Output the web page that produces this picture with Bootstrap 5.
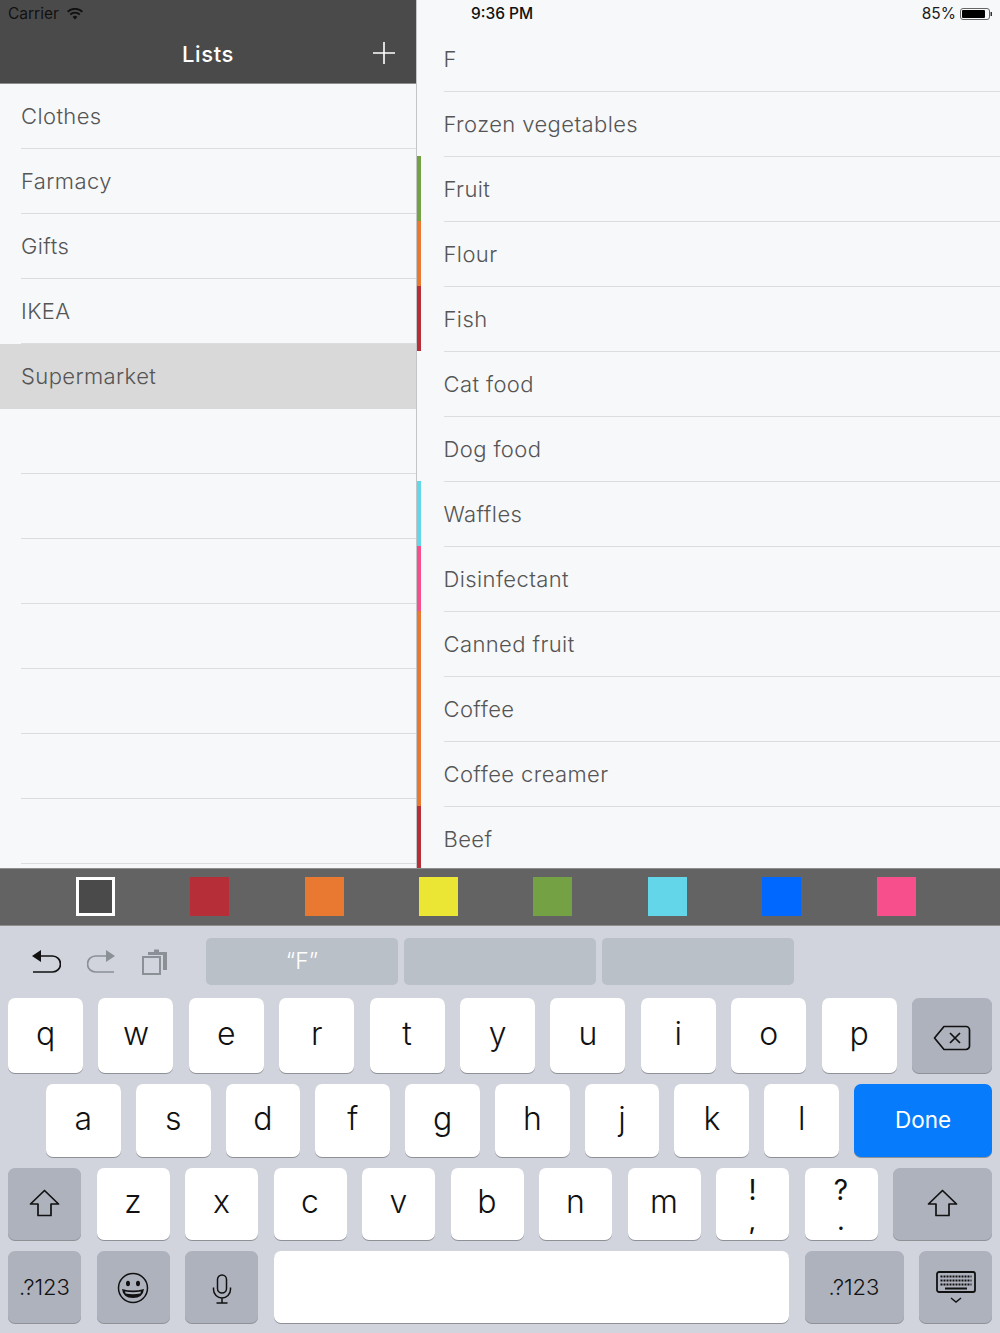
<!DOCTYPE html>
<html lang="en">
<head>
    <meta charset="UTF-8">
    <meta name="viewport" content="width=device-width, initial-scale=1.0">
    <title>Lists</title>
    <link href="https://cdn.jsdelivr.net/npm/bootstrap@5.3.0/dist/css/bootstrap.min.css" rel="stylesheet">
    <style>
        html, body {
            height: 1333px;
            overflow: hidden;
        }
        body {
            background-color: #f7f8fa;
            font-family: Inter, "Liberation Sans", sans-serif;
        }
        .panes {
            height: 868px;
            overflow: hidden;
        }
        .pane-left {
            width: 417px;
            border-right: 1px solid #c4c5c7;
        }
        .status-line {
            height: 26px;
            font-size: 15.5px;
            padding-top: 4px;
            padding-bottom: 2px;
            line-height: 20px;
            color: #1c1c1c;
        }
        .nav-head {
            height: 84px;
            background-color: #4a4a4a;
            border-bottom: 1px solid #8c8c8c;
        }
        .nav-head .status-line {
            padding-left: 8px;
            color: #111;
        }
        .nav-title {
            height: 57px;
            color: #fff;
            font-size: 22px;
            font-weight: 500;
            letter-spacing: .6px;
            padding-top: 16px;
            line-height: 25px;
        }
        .plus-btn {
            right: 20px;
            top: 41px;
        }
        .shop-list {
            border-radius: 0;
        }
        .shop-row {
            height: 65px;
            padding: 0;
            background: transparent;
            border: 0;
            color: #555;
            font-size: 22px;
            font-weight: 300;
            letter-spacing: .4px;
        }
        .row-label {
            height: 65px;
            line-height: 65px;
            display: block;
            border-bottom: 1px solid #dcdde0;
        }
        .pane-left .shop-row {
            padding-left: 21px;
        }
        .pane-left .shop-row.picked {
            padding-left: 0;
            background-color: #d9d9d9;
        }
        .picked .row-label {
            padding-left: 21px;
            border-bottom-color: #d9d9d9;
        }
        .pane-right .shop-row {
            border-left: 4px solid transparent;
            padding-left: 22.5px;
        }
        .pane-right .row-label {
            height: 66px;
            line-height: 67px;
        }
        .pane-right .status-line {
            padding-left: 54px;
            padding-right: 7px;
        }
        .clock {
            font-weight: 500;
            color: #111;
        }
        .stripe-green { border-left-color: #73a143 !important; }
        .stripe-orange { border-left-color: #e97831 !important; }
        .stripe-red { border-left-color: #b62f38 !important; }
        .stripe-cyan { border-left-color: #63d6ea !important; }
        .stripe-pink { border-left-color: #f64f8c !important; }
        .swatch-bar {
            height: 58px;
            background-color: #636363;
            border-top: 1px solid #8e8e8e;
            border-bottom: 1px solid #8e8e8e;
            padding-left: 75.7px;
            gap: 75.43px;
        }
        .swatch {
            width: 39px;
            height: 39px;
            margin-top: -1px;
        }
        .swatch-on {
            background-color: #4a4a4a;
            border: 3px solid #fff;
        }
        .swatch-red { background-color: #b62f38; }
        .swatch-orange { background-color: #e97831; }
        .swatch-yellow { background-color: #ebe533; }
        .swatch-green { background-color: #73a143; }
        .swatch-cyan { background-color: #63d6ea; }
        .swatch-blue { background-color: #0067ff; }
        .swatch-pink { background-color: #f64f8c; }
        .keyboard {
            height: 407px;
            background-color: #d1d4dc;
            padding: 12px 8px 10px;
        }
        .tool-row {
            height: 48px;
            margin-bottom: 12px;
        }
        .tool-icons {
            width: 198px;
            height: 47px;
            padding-left: 23px;
            gap: 26px;
        }
        .suggest {
            width: 192px;
            height: 47px;
            margin-right: 6px;
            background-color: #b9c0c8;
            border-radius: 5px;
            color: #fff;
            font-size: 23px;
            font-weight: 300;
        }
        .key-row {
            gap: 15.4px;
            margin-bottom: 11px;
        }
        .key-row-1 { height: 75px; }
        .key-row-2 { height: 73px; padding-left: 38px; gap: 15px; }
        .key-row-3, .key-row-4 { height: 72px; gap: 15.5px; }
        .kb-key {
            flex: 1 1 0;
            min-width: 0;
            padding: 0 0 4px;
            border: 0;
            border-radius: 7px;
            background-color: #fff;
            color: #111;
            font-size: 32px;
            font-weight: 300;
            line-height: 1;
            box-shadow: 0 1px 0 #8f9197;
        }
        .kb-key:hover, .kb-key:active {
            background-color: #fff;
            color: #111;
        }
        .key-dark, .key-dark:hover {
            background-color: #aeb2bd;
            padding-bottom: 0;
        }
        .key-fixed-73 { flex: 0 0 73px; }
        .key-fixed-80 { flex: 0 0 80px; }
        .key-fixed-99 { flex: 0 0 99px; }
        .key-done, .key-done:hover {
            flex: 0 0 138px;
            padding-bottom: 0;
            background-color: #067bfb;
            color: #fff;
            font-size: 22.5px;
            font-weight: 400;
        }
        .key-num {
            font-size: 22px;
        }
        .key-pair {
            font-size: 28px;
            font-weight: 400;
            line-height: 31.5px;
            padding: 4px 0 0;
        }
        .key-pair .key-lower {
            font-size: 24px;
            font-weight: 500;
        }
        .shift-icon {
            margin-bottom: 4px;
        }
    </style>
</head>
<body>

    <div class="panes d-flex">
        <div class="pane-left flex-shrink-0">
            <div class="nav-head position-relative">
                <div class="status-line d-flex align-items-center gap-2">
                    <span>Carrier</span>
                    <svg width="16" height="12" viewBox="0 0 16 12"><path d="M8 11.500 5.600 8.900a3.500 3.500 0 0 1 4.800 0zM3.900 7.200l-1.300-1.400a8 8 0 0 1 10.800 0l-1.300 1.400a6 6 0 0 0-8.200 0zM1.300 4.400 0 3a11.800 11.800 0 0 1 16 0l-1.300 1.400a9.900 9.900 0 0 0-13.400 0z" fill="#111"/></svg>
                </div>
                <div class="nav-title text-center">Lists</div>
                <svg class="plus-btn position-absolute" width="24" height="24" viewBox="0 0 24 24"><path d="M12 1v22M1 12h22" stroke="#fff" stroke-width="1.600"/></svg>
            </div>
            <ul class="list-group list-group-flush shop-list">
                <li class="list-group-item shop-row"><span class="row-label">Clothes</span></li>
                <li class="list-group-item shop-row"><span class="row-label">Farmacy</span></li>
                <li class="list-group-item shop-row"><span class="row-label">Gifts</span></li>
                <li class="list-group-item shop-row"><span class="row-label">IKEA</span></li>
                <li class="list-group-item shop-row picked"><span class="row-label">Supermarket</span></li>
                <li class="list-group-item shop-row"><span class="row-label"></span></li>
                <li class="list-group-item shop-row"><span class="row-label"></span></li>
                <li class="list-group-item shop-row"><span class="row-label"></span></li>
                <li class="list-group-item shop-row"><span class="row-label"></span></li>
                <li class="list-group-item shop-row"><span class="row-label"></span></li>
                <li class="list-group-item shop-row"><span class="row-label"></span></li>
                <li class="list-group-item shop-row"><span class="row-label"></span></li>
            </ul>
        </div>

        <div class="pane-right flex-grow-1">
            <div class="status-line d-flex align-items-center justify-content-between">
                <span class="clock">9:36 PM</span>
                <span class="d-flex align-items-center gap-1">85%
                    <svg width="33" height="14" viewBox="0 0 33 14"><rect x=".5" y="1.500" width="29" height="11" rx="2.500" fill="none" stroke="#666"/><rect x="2" y="3" width="23" height="8" rx="1" fill="#000"/><rect x="30.500" y="5" width="1.500" height="4" fill="#333"/></svg>
                </span>
            </div>
            <ul class="list-group list-group-flush shop-list">
                <li class="list-group-item shop-row"><span class="row-label">F</span></li>
                <li class="list-group-item shop-row"><span class="row-label">Frozen vegetables</span></li>
                <li class="list-group-item shop-row stripe-green"><span class="row-label">Fruit</span></li>
                <li class="list-group-item shop-row stripe-orange"><span class="row-label">Flour</span></li>
                <li class="list-group-item shop-row stripe-red"><span class="row-label">Fish</span></li>
                <li class="list-group-item shop-row"><span class="row-label">Cat food</span></li>
                <li class="list-group-item shop-row"><span class="row-label">Dog food</span></li>
                <li class="list-group-item shop-row stripe-cyan"><span class="row-label">Waffles</span></li>
                <li class="list-group-item shop-row stripe-pink"><span class="row-label">Disinfectant</span></li>
                <li class="list-group-item shop-row stripe-orange"><span class="row-label">Canned fruit</span></li>
                <li class="list-group-item shop-row stripe-orange"><span class="row-label">Coffee</span></li>
                <li class="list-group-item shop-row stripe-orange"><span class="row-label">Coffee creamer</span></li>
                <li class="list-group-item shop-row stripe-red"><span class="row-label">Beef</span></li>
            </ul>
        </div>
    </div>

    <div class="swatch-bar d-flex align-items-center">
        <div class="swatch swatch-on"></div>
        <div class="swatch swatch-red"></div>
        <div class="swatch swatch-orange"></div>
        <div class="swatch swatch-yellow"></div>
        <div class="swatch swatch-green"></div>
        <div class="swatch swatch-cyan"></div>
        <div class="swatch swatch-blue"></div>
        <div class="swatch swatch-pink"></div>
    </div>

    <div class="keyboard">
        <div class="tool-row d-flex align-items-start">
            <div class="tool-icons d-flex align-items-center">
                <svg width="30" height="25" viewBox="0 0 30 25"><path d="M10 1 1 7l9 6z" fill="#111"/><path d="M8 7h13.500a7.500 7.500 0 0 1 0 16H2" fill="none" stroke="#111" stroke-width="1.700"/></svg>
                <svg width="29" height="25" viewBox="0 0 29 25"><path d="M19 1l9 6-9 6z" fill="#8b8f96"/><path d="M21 7H8.500a7.500 7.500 0 0 0 0 16H27" fill="none" stroke="#8b8f96" stroke-width="1.700"/></svg>
                <svg width="26" height="27" viewBox="0 0 26 27"><rect x="1" y="9" width="17" height="17" fill="none" stroke="#8b8f96" stroke-width="2"/><path d="M6 6.500V4h6V1.500h5V4h8v18h-4V7H6z" fill="#8b8f96"/></svg>
            </div>
            <div class="suggest d-flex align-items-center justify-content-center">“F”</div>
            <div class="suggest"></div>
            <div class="suggest"></div>
        </div>

        <div class="key-row key-row-1 d-flex">
            <button class="btn kb-key">q</button>
            <button class="btn kb-key">w</button>
            <button class="btn kb-key">e</button>
            <button class="btn kb-key">r</button>
            <button class="btn kb-key">t</button>
            <button class="btn kb-key">y</button>
            <button class="btn kb-key">u</button>
            <button class="btn kb-key">i</button>
            <button class="btn kb-key">o</button>
            <button class="btn kb-key">p</button>
            <button class="btn kb-key key-dark key-fixed-80">
                <svg width="38" height="26" viewBox="0 0 38 26"><path d="M11 1.500h22a3.500 3.500 0 0 1 3.500 3.500v16a3.500 3.500 0 0 1-3.500 3.500H11L1.500 13z" fill="none" stroke="#111" stroke-width="1.700" stroke-linejoin="round"/><path d="M17 8l10 10M27 8 17 18" stroke="#111" stroke-width="1.700"/></svg>
            </button>
        </div>

        <div class="key-row key-row-2 d-flex">
            <button class="btn kb-key">a</button>
            <button class="btn kb-key">s</button>
            <button class="btn kb-key">d</button>
            <button class="btn kb-key">f</button>
            <button class="btn kb-key">g</button>
            <button class="btn kb-key">h</button>
            <button class="btn kb-key">j</button>
            <button class="btn kb-key">k</button>
            <button class="btn kb-key">l</button>
            <button class="btn kb-key key-done">Done</button>
        </div>

        <div class="key-row key-row-3 d-flex">
            <button class="btn kb-key key-dark">
                <svg class="shift-icon" width="31" height="28" viewBox="0 0 31 28"><path d="M15.500 1.500 1.500 15h7.500v11.500h13V15h7.500z" fill="none" stroke="#111" stroke-width="1.700" stroke-linejoin="round"/></svg>
            </button>
            <button class="btn kb-key">z</button>
            <button class="btn kb-key">x</button>
            <button class="btn kb-key">c</button>
            <button class="btn kb-key">v</button>
            <button class="btn kb-key">b</button>
            <button class="btn kb-key">n</button>
            <button class="btn kb-key">m</button>
            <button class="btn kb-key d-flex flex-column align-items-center justify-content-center key-pair"><span>!</span><span class="key-lower">,</span></button>
            <button class="btn kb-key d-flex flex-column align-items-center justify-content-center key-pair"><span>?</span><span class="key-lower">.</span></button>
            <button class="btn kb-key key-dark key-fixed-99">
                <svg class="shift-icon" width="31" height="28" viewBox="0 0 31 28"><path d="M15.500 1.500 1.500 15h7.500v11.500h13V15h7.500z" fill="none" stroke="#111" stroke-width="1.700" stroke-linejoin="round"/></svg>
            </button>
        </div>

        <div class="key-row key-row-4 d-flex">
            <button class="btn kb-key key-dark key-fixed-73 key-num">.?123</button>
            <button class="btn kb-key key-dark key-fixed-73">
                <svg width="32" height="32" viewBox="0 0 32 32"><circle cx="16" cy="16" r="14.500" fill="none" stroke="#111" stroke-width="1.500"/><ellipse cx="11" cy="11.500" rx="2" ry="2.800" fill="#111"/><ellipse cx="21" cy="11.500" rx="2" ry="2.800" fill="#111"/><path d="M5 17q11 3 22 0q-1 9-11 9T5 17z" fill="#111"/><path d="M8 19.500q8 1.500 16 0l-.6 2q-7.400 1.300-14.800 0z" fill="#aeb2bd"/></svg>
            </button>
            <button class="btn kb-key key-dark key-fixed-73">
                <svg width="20" height="30" viewBox="0 0 20 30"><rect x="5.500" y="1" width="9" height="18" rx="4.500" fill="none" stroke="#111" stroke-width="1.500"/><path d="M1.500 13.500v2a8.500 8.500 0 0 0 17 0v-2M10 24v5M4.500 29h11" fill="none" stroke="#111" stroke-width="1.500"/></svg>
            </button>
            <button class="btn kb-key"></button>
            <button class="btn kb-key key-dark key-fixed-99 key-num">.?123</button>
            <button class="btn kb-key key-dark key-fixed-73">
                <svg width="40" height="34" viewBox="0 0 40 34"><rect x="1" y="1" width="38" height="20" rx="2" fill="none" stroke="#111" stroke-width="1.800"/><path d="M4.500 5.500h31M4.500 9.500h31M4.500 13.500h31" stroke="#111" stroke-width="2" stroke-dasharray="2 1"/><path d="M9 17.500h22" stroke="#111" stroke-width="2"/><path d="M15 27l5 4 5-4" fill="none" stroke="#111" stroke-width="1.400"/></svg>
            </button>
        </div>
    </div>

</body>
</html>
